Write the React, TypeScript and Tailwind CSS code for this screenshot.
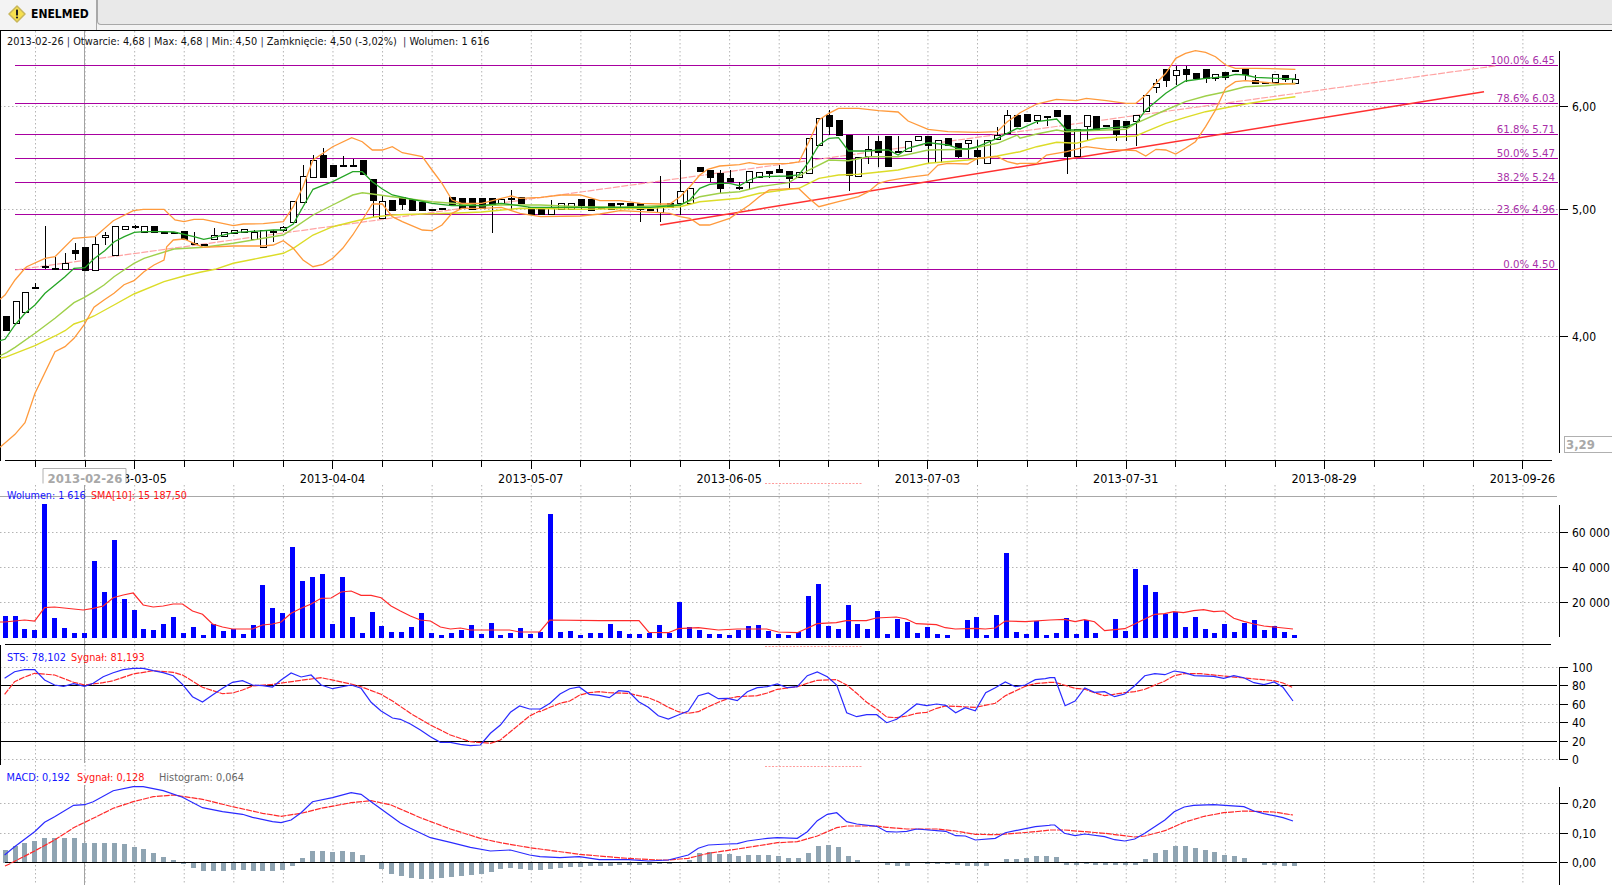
// App.tsx
type P = number[];

const GRID_X = Array.from({ length: 31 }, (_, k) => 35.5 + 49.58 * k);
const barX = (i: number) => 5.6 + 9.917 * i;
const FONT = "'DejaVu Sans Condensed','DejaVu Sans',sans-serif";

// crops were read at different scales, these map them back to page coordinates
const low = (ox: number, oy: number, fx: number) => (pts: P[]) => pts.map(([x, y]) => [ox + x / fx, oy + y / 3]);
const z0 = low(0, 250, 3);
const z1 = low(0, 0, 3);
const z2 = low(520, 90, 2.904);
const z3 = low(1020, 30, 2.64);
const z4 = low(0, 420, 2.8);
const z5 = low(1050, 420, 2.786);
const z6 = low(0, 625, 2.8);
const z7 = low(1050, 625, 2.786);
const z8 = low(600, 570, 3);
const z9 = low(540, 625, 3);

const clip = (pts: P[], from: number, to: number) => pts.filter(([x]) => x >= from && x < to);
const path = (pts: P[]) => pts.map(([x, y]) => `${x.toFixed(1)},${y.toFixed(1)}`).join(" ");

const upper = [
  ...z0([[0, 148], [15, 135], [45, 90], [75, 55]]),
  ...z1([[80, 800], [135, 775], [165, 770], [220, 715], [285, 710], [340, 662], [400, 632], [430, 628], [492, 628], [525, 660], [552, 665], [582, 658], [610, 658], [700, 677], [730, 672], [790, 671], [850, 665], [880, 620], [909, 560], [939, 480], [969, 460], [998, 440], [1055, 413], [1087, 425], [1117, 450], [1147, 450], [1177, 440], [1207, 458], [1267, 470], [1296, 510], [1326, 550], [1356, 600], [1385, 610], [1445, 610], [1504, 595], [1534, 588]]),
  ...clip(z2([[0, 325], [60, 322], [120, 315], [175, 315], [232, 332], [290, 332], [350, 340], [407, 342], [435, 342], [465, 320], [493, 290], [522, 255], [545, 238], [580, 228], [637, 224], [666, 218], [695, 223], [781, 220], [810, 216], [839, 155], [868, 90], [897, 70], [925, 55], [983, 55], [1041, 62], [1098, 66], [1127, 93], [1185, 118], [1243, 125], [1330, 127], [1386, 125], [1415, 95], [1444, 75]]), 515, 1020),
  ...z3([[0, 248], [44, 222], [96, 208], [149, 212], [175, 205], [228, 212], [280, 220], [306, 220], [332, 195], [359, 160], [385, 130], [411, 85], [437, 70], [463, 62], [490, 67], [516, 80], [543, 105], [569, 115], [622, 115], [727, 118]]),
];
const lower = [
  ...z0([[0, 592], [45, 553], [75, 518], [105, 430], [165, 305], [195, 290], [222, 265], [252, 225], [282, 172], [312, 150], [342, 130], [372, 104], [402, 92], [432, 65], [462, 45], [492, 30]]),
  ...z1([[500, 740], [520, 720], [552, 717], [582, 730], [610, 742], [700, 738], [790, 738], [820, 735], [850, 722], [880, 745], [909, 780], [939, 800], [969, 793], [998, 775], [1028, 745], [1058, 705], [1087, 660], [1117, 612], [1147, 612], [1177, 650], [1207, 665], [1267, 690], [1296, 692], [1326, 675], [1356, 640], [1385, 625], [1445, 625], [1504, 622]]),
  ...clip(z2([[0, 370], [60, 380], [175, 378], [232, 372], [290, 362], [350, 365], [407, 368], [435, 370], [465, 380], [493, 385], [522, 405], [550, 405], [609, 385], [666, 345], [695, 320], [724, 300], [781, 296], [810, 296], [839, 325], [868, 350], [925, 335], [983, 320], [1012, 305], [1041, 280], [1070, 272], [1127, 262], [1185, 255], [1214, 225], [1243, 220], [1300, 222], [1329, 205], [1386, 200], [1415, 215], [1444, 222]]), 515, 1020),
  ...z3([[0, 400], [44, 400], [70, 375], [123, 365], [175, 350], [228, 358], [306, 362], [332, 378], [359, 358], [385, 360], [411, 372], [437, 355], [463, 335], [490, 290], [516, 240], [543, 175], [569, 155], [595, 152], [674, 160], [727, 162]]),
];
const maFast = [
  ...z0([[0, 272], [15, 268], [45, 225], [75, 190], [105, 165], [135, 130], [165, 105], [195, 80], [222, 55]]),
  ...z1([[255, 803], [284, 775], [314, 752], [343, 725], [373, 710], [403, 697], [433, 695], [493, 695], [522, 696], [552, 703], [582, 710], [611, 718], [641, 712], [700, 698], [820, 690], [850, 690], [880, 672], [909, 620], [939, 568], [969, 556], [998, 545], [1058, 515], [1087, 515], [1117, 545], [1147, 567], [1177, 585], [1237, 598], [1296, 610], [1356, 617], [1445, 617], [1504, 610]]),
  ...clip(z2([[32, 352], [90, 352], [175, 352], [290, 352], [378, 352], [465, 345], [493, 330], [522, 295], [551, 283], [580, 280], [609, 280], [637, 287], [666, 270], [695, 260], [781, 258], [810, 255], [839, 215], [868, 165], [897, 145], [925, 143], [954, 183], [1012, 183], [1041, 180], [1070, 180], [1098, 195], [1127, 175], [1185, 158], [1243, 165], [1271, 175], [1300, 177], [1329, 170], [1386, 145], [1444, 115]]), 515, 1020),
  ...z3([[0, 297], [44, 275], [97, 267], [123, 300], [175, 300], [254, 292], [280, 290], [306, 280], [332, 240], [385, 190], [411, 170], [437, 153], [490, 145], [543, 140], [569, 133], [595, 135], [622, 142], [674, 145], [727, 147]]),
];
const maMid = [
  ...z0([[0, 317], [20, 308], [45, 292], [105, 250], [165, 205], [222, 158], [252, 143], [282, 125], [312, 105], [342, 80], [372, 60], [402, 40], [432, 25]]),
  ...z1([[522, 747], [611, 742], [700, 730], [790, 715], [850, 705], [880, 685], [939, 645], [998, 615], [1058, 585], [1087, 578], [1117, 582], [1177, 590], [1237, 598], [1296, 605], [1356, 610], [1445, 617], [1504, 615]]),
  ...clip(z2([[60, 345], [175, 350], [290, 352], [378, 348], [465, 345], [522, 320], [580, 310], [637, 305], [695, 290], [781, 278], [839, 240], [897, 210], [954, 212], [1012, 200], [1098, 200], [1185, 180], [1300, 178], [1386, 160], [1444, 135]]), 515, 1020),
  ...z3([[0, 325], [44, 312], [97, 300], [123, 305], [175, 302], [280, 298], [306, 280], [385, 240], [437, 215], [490, 198], [543, 185], [595, 170], [648, 167], [727, 160]]),
];
const maSlow = [
  ...z0([[0, 325], [15, 322], [105, 287], [165, 258], [195, 242], [222, 222], [252, 212], [282, 198], [342, 165], [402, 132], [492, 95], [552, 78], [600, 67]]),
  ...z1([[645, 808], [700, 790], [790, 772], [850, 760], [880, 745], [939, 705], [998, 680], [1058, 665], [1117, 652], [1177, 645], [1237, 643], [1356, 640], [1445, 636]]),
  ...clip(z2([[0, 355], [175, 358], [378, 355], [465, 350], [522, 335], [637, 325], [695, 310], [781, 298], [810, 295], [868, 265], [925, 255], [983, 253], [1098, 240], [1185, 220], [1300, 210], [1386, 198]]), 515, 1020),
  ...z3([[0, 365], [44, 350], [97, 337], [149, 340], [202, 325], [306, 318], [332, 305], [385, 280], [437, 262], [490, 245], [543, 233], [595, 222], [648, 212], [727, 200]]),
];

// top, bottom, white, high, low
const CANDLES: number[][] = [
  [316, 330, 0], [301, 323, 1], [292, 312, 1], [287, 288, 0, 283, 289], [266, 267, 0, 226, 269], [268, 269, 0, 257, 270], [263, 269, 1, 253], [250, 253, 0, 243, 260], [247, 270, 0], [244, 270, 1, 237],
  [235, 237, 1, 232, 245], [226, 255, 1], [226, 229, 1], [226, 227, 0, 225, 229], [226, 232, 1], [226, 232, 0], [232, 233, 0], [232, 233, 0], [231, 239, 0], [243, 244, 0, 232, 245],
  [244, 245, 0], [235, 239, 1, 228], [232, 236, 1], [230, 233, 1], [229, 232, 1], [232, 239, 1, 230], [230, 247, 1], [231, 232, 0, 230, 242], [227, 230, 1, 226, 232], [201, 222, 1],
  [176, 202, 1, 165], [160, 177, 1, 155], [155, 177, 0, 148], [165, 176, 0], [165, 166, 0, 156, 166], [165, 166, 0, 159, 166], [160, 174, 0], [179, 200, 0, 179, 217], [201, 218, 1, 195], [200, 210, 0],
  [197, 204, 0, 197, 210], [199, 210, 0], [202, 210, 0], [209, 210, 0], [208, 209, 0], [197, 204, 0], [198, 208, 0], [198, 209, 0], [198, 208, 0], [198, 204, 0, 198, 233],
  [199, 203, 1], [198, 199, 0, 190, 210], [197, 203, 0], [207, 214, 0], [209, 214, 0], [208, 214, 1, 200], [203, 209, 1], [203, 209, 1], [199, 205, 0, 199, 210], [199, 210, 0],
  [207, 208, 0], [203, 209, 0], [203, 204, 0, 203, 209], [203, 208, 0], [203, 209, 0, 203, 222], [209, 210, 0], [207, 212, 1, 176, 222], [203, 207, 0], [191, 203, 1, 160, 215], [188, 203, 1],
  [167, 171, 0], [170, 177, 0, 170, 182], [173, 188, 0, 170, 193], [178, 181, 0, 170], [187, 188, 0, 182, 190], [171, 182, 1, 171, 189], [172, 177, 1, 172, 178], [171, 173, 0, 171, 178], [169, 172, 0, 165], [171, 178, 0, 171, 188],
  [172, 177, 1], [138, 173, 1], [118, 145, 1], [115, 126, 0, 110, 135], [120, 135, 0], [135, 175, 0, 135, 191], [157, 176, 1], [149, 156, 1, 136, 164], [141, 152, 0, 136, 167], [136, 166, 0],
  [151, 152, 0, 136, 152], [141, 151, 1, 141, 152], [136, 140, 1], [136, 145, 0, 136, 163], [140, 162, 1], [138, 145, 0], [143, 156, 0, 143, 158], [140, 143, 1, 140, 158], [150, 156, 0, 140, 165], [140, 163, 1],
  [135, 139, 1, 127], [115, 133, 1, 110], [115, 126, 0], [114, 121, 0], [115, 120, 1, 115, 124], [116, 117, 0, 116, 126], [110, 116, 0], [115, 156, 0, 115, 174], [129, 156, 1], [115, 126, 1, 115, 141],
  [116, 130, 0], [125, 126, 0], [120, 134, 0, 120, 141], [121, 127, 0, 121, 141], [115, 121, 1, 115, 146], [95, 111, 1], [83, 87, 1, 79, 93], [69, 80, 0, 69, 87], [70, 75, 1, 66, 85], [69, 74, 0, 66, 82],
  [73, 78, 0], [69, 78, 0, 69, 83], [74, 78, 1, 74, 81], [72, 77, 0, 72, 80], [70, 71, 0], [69, 74, 0, 69, 81], [80, 83, 0, 75], [82, 83, 0], [74, 82, 1], [75, 79, 0, 75, 82], [79, 83, 1, 74],
];

const VOLUME = [
  21.7, 21.7, 8.7, 7.7, 133.7, 19.7, 9.7, 4.7, 4.7, 76.7, 45.7, 97.7, 38.7, 27.7, 8.7, 7.7, 13.7, 20.7, 4.7, 10.7,
  2.7, 13.7, 6.7, 8.7, 3.7, 12.7, 52.7, 29.7, 24.7, 90.7, 56.7, 60.7, 63.7, 13.7, 60.7, 20.7, 4.7, 25.7, 11.7, 5.7,
  5.7, 10.7, 24.7, 4.7, 2.7, 4.7, 7.7, 12.7, 3.7, 14.7, 2.7, 4.7, 9.7, 3.7, 5.7, 124, 5.7, 6.7, 2.7, 4.7,
  4.7, 14, 7, 4, 4, 5, 13, 5, 36, 11, 8, 4, 4, 3, 8, 12, 13, 7, 4, 3,
  6, 42, 54, 12, 9, 33, 14, 9, 27, 4, 19, 16, 5, 11, 4, 3, 0, 18, 21, 3,
  23, 85, 6, 4, 17, 3, 5, 19.7, 3.7, 17.7, 4.7, 0, 18.7, 6.7, 68.7, 52.7, 45.7, 23.7, 25.7, 10.7,
  20.7, 8.7, 4.7, 13.7, 5.7, 14.7, 17.7, 7.7, 11.7, 5.7, 2.7,
];
const HIST = [
  12.3, 16.3, 19.3, 21.3, 24.3, 24.3, 24.3, 24.3, 19.3, 19.3, 19.3, 19.3, 18.3, 15.3, 13.3, 9.3, 5.3, 2.3, -1.7, -5.7,
  -8.7, -8.7, -8.7, -7.7, -7.7, -8.7, -8.7, -8.7, -7.7, -3.7, 4.3, 11.3, 11.3, 10.3, 11.3, 10.3, 7.3, 0, -6.7, -11.7,
  -13.7, -15.7, -16.7, -16.7, -15.7, -14.7, -13.7, -12.7, -11.7, -9.7, -6.7, -5.7, -6.7, -7.7, -7.7, -6.7, -5.7, -4.7, -4, -3.7,
  -3.7, -3.7, -2.7, -2.7, -2.7, -2.7, -1.7, -1, 0, 3, 9.3, 10.3, 8.3, 8.3, 6.3, 7.3, 7.3, 7.3, 6.3, 4.3,
  4.3, 9.3, 16.3, 17.3, 15.3, 6.3, 2.3, 0, 0, -2, -3, -3, 0, -1, -1, -1, -2, -3, -3, -3,
  0, 3.3, 3.3, 4.3, 6.3, 6.3, 5.3, -2, -2, -1, -2, -2, -2, -2, -2, 3.3, 9.3, 12.3, 16.3, 16.3,
  14.3, 12.3, 10.3, 7.3, 6.3, 4.3, 0, -2, -2, -3, -3,
];

const smaLine = [
  ...z4([[0, 606], [13, 606], [41, 603], [69, 600], [97, 603], [125, 563], [153, 561], [206, 567], [233, 570], [261, 565], [289, 558], [317, 533], [345, 525], [373, 519], [401, 555], [429, 561], [457, 558], [485, 552], [511, 552], [539, 573], [567, 583], [595, 612], [623, 621], [651, 627], [707, 627], [735, 615], [763, 612], [787, 606], [815, 580], [843, 565], [871, 552], [899, 535], [927, 534], [955, 516], [983, 513], [1011, 526], [1039, 526], [1067, 533], [1095, 558], [1121, 573], [1149, 588], [1177, 600], [1205, 603], [1233, 621], [1261, 627], [1289, 624], [1317, 630], [1373, 630], [1427, 630], [1455, 636], [1511, 636], [1539, 600]]),
  ...z8([[0, 152], [117, 152], [147, 187], [205, 188], [235, 176], [295, 173], [355, 180], [412, 177], [500, 177], [535, 186], [592, 188], [652, 161], [709, 158], [739, 152], [799, 152], [829, 144], [889, 141], [919, 147], [949, 161], [1009, 164], [1036, 173], [1066, 177], [1126, 175], [1156, 177], [1186, 174], [1216, 153], [1276, 155], [1350, 150]]),
  ...z5([[0, 600], [40, 598], [70, 605], [96, 599], [124, 605], [152, 632], [208, 626], [236, 612], [264, 597], [292, 583], [319, 581], [345, 575], [372, 578], [400, 572], [428, 569], [456, 575], [484, 573], [512, 595], [540, 604], [568, 612], [596, 618], [624, 621], [677, 627]]),
];
const stsBlue = [
  ...z6([[13, 160], [41, 140], [69, 134], [97, 134], [125, 165], [153, 180], [178, 184], [206, 176], [237, 184], [261, 175], [289, 155], [317, 143], [345, 134], [373, 130], [401, 130], [429, 137], [457, 143], [485, 152], [511, 178], [539, 215], [567, 231], [595, 210], [623, 190], [651, 172], [679, 167], [707, 180], [735, 182], [763, 186], [787, 165], [815, 144], [843, 156], [871, 150], [899, 180], [931, 191], [983, 180], [1011, 190], [1039, 232], [1067, 258], [1099, 279], [1121, 283], [1149, 297], [1177, 315], [1205, 335], [1233, 352], [1261, 352], [1289, 358], [1317, 362], [1345, 360], [1373, 325], [1401, 300], [1429, 262], [1455, 243], [1483, 252], [1511, 252]]),
  ...z9([[0, 253], [30, 235], [60, 207], [89, 191], [118, 186], [148, 208], [178, 211], [208, 218], [236, 197], [266, 200], [296, 230], [325, 247], [355, 272], [385, 282], [415, 270], [445, 258], [475, 212], [505, 204], [535, 221], [563, 220], [592, 227], [622, 200], [652, 188], [682, 185], [712, 177], [742, 188], [772, 185], [802, 152], [832, 141], [862, 155], [890, 180], [920, 263], [950, 275], [980, 269], [1010, 269], [1040, 293], [1070, 283], [1100, 260], [1130, 237], [1160, 242], [1190, 237], [1217, 241], [1247, 263], [1276, 248], [1306, 257], [1337, 203], [1366, 188], [1396, 171], [1426, 185], [1456, 180], [1486, 164], [1516, 161]]),
  ...z7([[0, 158], [13, 158], [42, 242], [70, 228], [97, 189], [124, 202], [152, 200], [180, 215], [208, 207], [236, 182], [264, 152], [292, 146], [320, 149], [346, 138], [374, 143], [402, 152], [456, 154], [484, 160], [512, 152], [540, 158], [568, 173], [596, 179], [624, 171], [649, 187], [677, 228]]),
];
const stsRed = [
  ...z6([[13, 208], [41, 170], [69, 156], [97, 145], [153, 150], [206, 172], [237, 180], [289, 173], [317, 167], [373, 147], [429, 137], [485, 142], [511, 150], [567, 187], [623, 206], [651, 204], [679, 195], [707, 183], [763, 178], [843, 166], [899, 158], [983, 177], [1011, 185], [1067, 208], [1099, 228], [1149, 265], [1205, 300], [1261, 330], [1317, 350], [1373, 355], [1401, 345], [1429, 320], [1483, 273], [1511, 258]]),
  ...z9([[0, 260], [30, 247], [60, 235], [89, 228], [118, 211], [148, 203], [178, 200], [208, 203], [266, 205], [296, 212], [325, 218], [355, 230], [385, 247], [415, 260], [445, 265], [475, 260], [505, 245], [535, 232], [563, 221], [592, 215], [652, 212], [682, 204], [712, 193], [772, 185], [802, 175], [832, 166], [890, 164], [920, 180], [950, 205], [980, 232], [1010, 252], [1040, 276], [1070, 278], [1100, 273], [1130, 265], [1160, 262], [1190, 250], [1217, 243], [1306, 247], [1366, 235], [1396, 212], [1426, 198], [1456, 184], [1486, 176]]),
  ...z7([[0, 172], [13, 172], [70, 190], [97, 193], [124, 203], [152, 212], [208, 203], [236, 200], [264, 193], [320, 168], [346, 152], [374, 146], [420, 146], [484, 153], [540, 159], [624, 167], [649, 174], [677, 188]]),
];
const macdBlue = [
  ...z6([[13, 690], [41, 665], [97, 620], [125, 592], [153, 575], [206, 541], [237, 539], [261, 530], [317, 497], [373, 485], [401, 485], [457, 497], [511, 517], [567, 548], [623, 560], [679, 568], [707, 577], [763, 590], [787, 593], [815, 585], [843, 563], [875, 530], [931, 518], [983, 503], [1011, 508], [1039, 530], [1067, 552], [1121, 594], [1149, 610], [1205, 638], [1261, 652], [1317, 667], [1373, 678], [1429, 675], [1483, 690]]),
  ...z9([[0, 695], [60, 698], [118, 695], [178, 704], [266, 704], [325, 708], [385, 705], [445, 690], [475, 670], [505, 660], [563, 657], [592, 656], [622, 648], [682, 640], [712, 638], [772, 640], [802, 620], [832, 587], [862, 568], [890, 563], [920, 590], [950, 597], [1010, 604], [1040, 620], [1070, 621], [1100, 619], [1130, 612], [1217, 619], [1247, 632], [1276, 633], [1306, 645], [1366, 640], [1396, 623], [1426, 617], [1486, 605], [1530, 601]]),
  ...z7([[0, 600], [13, 600], [40, 625], [70, 632], [97, 627], [152, 635], [180, 644], [208, 648], [236, 642], [264, 625], [320, 585], [346, 560], [374, 546], [400, 541], [456, 539], [540, 545], [568, 558], [596, 566], [624, 572], [649, 578], [677, 588]]),
];
const macdRed = [
  [5, 866],
  ...z6([[25, 718], [97, 678], [153, 645], [206, 608], [261, 580], [317, 550], [373, 530], [429, 515], [485, 510], [567, 523], [651, 545], [735, 565], [787, 574], [843, 565], [899, 550], [983, 533], [1039, 527], [1095, 540], [1177, 578], [1261, 612], [1345, 640], [1401, 653], [1483, 668]]),
  ...z9([[0, 672], [118, 688], [236, 698], [296, 702], [355, 705], [385, 705], [445, 700], [505, 685], [592, 672], [682, 658], [712, 653], [772, 650], [832, 633], [862, 620], [890, 608], [920, 603], [1010, 603], [1040, 607], [1100, 612], [1190, 612], [1247, 618], [1306, 628], [1366, 629], [1426, 625], [1486, 620], [1530, 615]]),
  ...z7([[0, 615], [40, 615], [152, 625], [236, 636], [264, 633], [320, 617], [374, 592], [430, 574], [484, 563], [540, 558], [624, 561], [677, 570]]),
];

const FIB = [
  { y: 65.5, label: "100.0% 6.45", ty: 64 },
  { y: 103.5, label: "78.6% 6.03", ty: 102 },
  { y: 134.5, label: "61.8% 5.71", ty: 133 },
  { y: 158.5, label: "50.0% 5.47", ty: 157 },
  { y: 182.5, label: "38.2% 5.24", ty: 181 },
  { y: 214.5, label: "23.6% 4.96", ty: 213 },
  { y: 269.5, label: "0.0% 4.50", ty: 268 },
];
const DOTTED_Y = [106.5, 209.5, 336.5, 532.5, 567.5, 602.5, 667.5, 704.5, 722.5, 759.5, 803.5, 833.5];
const DATES: [number, string][] = [
  [2, "2013-03-05"], [6, "2013-04-04"], [10, "2013-05-07"], [14, "2013-06-05"],
  [18, "2013-07-03"], [22, "2013-07-31"], [26, "2013-08-29"], [30, "2013-09-26"],
];
const TICKS: [number, string][] = [
  [106.5, "6,00"], [209.5, "5,00"], [336.5, "4,00"],
  [532.5, "60 000"], [567.5, "40 000"], [602.5, "20 000"],
  [667.5, "100"], [685.5, "80"], [704.5, "60"], [722.5, "40"], [741.5, "20"], [759.5, "0"],
  [803.5, "0,20"], [833.5, "0,10"], [862.5, "0,00"],
];

function Candle({ c, i }: { c: number[]; i: number }) {
  const [top, bottom, white, high = top, lo = bottom] = c;
  const x = Math.round(barX(i)) + 0.5;
  const flat = bottom - top <= 1;
  return (
    <g>
      <line x1={x} x2={x} y1={high} y2={lo} stroke="#000" strokeWidth={1} shapeRendering="crispEdges" />
      {flat ? (
        <rect x={x - 3.5} y={top} width={7} height={2} fill="#000" shapeRendering="crispEdges" />
      ) : (
        <rect x={x - 3} y={top + 0.5} width={6} height={bottom - top} fill={white ? "#fff" : "#000"} stroke="#000" strokeWidth={1} shapeRendering="crispEdges" />
      )}
    </g>
  );
}

function Chart() {
  return (
    <svg width={1612} height={854} viewBox="0 31 1612 854" className="block">
      {GRID_X.map((x) => (
        <g key={x}>
          <line x1={x} x2={x} y1={31} y2={460} stroke="#b4b4b4" strokeDasharray="1.5 2.5" />
          <line x1={x} x2={x} y1={485} y2={885} stroke="#b4b4b4" strokeDasharray="1.5 2.5" />
        </g>
      ))}
      {DOTTED_Y.map((y) => (
        <line key={y} x1={0} x2={1558} y1={y} y2={y} stroke="#b4b4b4" strokeDasharray="1.5 2.5" />
      ))}

      {/* crosshair */}
      <g stroke="#a3a3a3" shapeRendering="crispEdges">
        <line x1={84.5} x2={84.5} y1={31} y2={457} />
        <line x1={84.5} x2={84.5} y1={485} y2={763} />
        <line x1={84.5} x2={84.5} y1={785} y2={885} />
      </g>

      {/* price pane */}
      <line x1={0.5} x2={0.5} y1={31} y2={461} stroke="#000" />
      <line x1={0.5} x2={0.5} y1={645} y2={765} stroke="#000" />
      {FIB.map((f) => (
        <line key={f.y} x1={15} x2={1558} y1={f.y} y2={f.y} stroke="#a800a0" shapeRendering="crispEdges" />
      ))}
      <line x1={15} y1={270} x2={1497} y2={65.7} stroke="#ffa3a3" strokeWidth={1.2} strokeDasharray="7 1.5" />
      <line x1={660} y1={225} x2={1484} y2={91.7} stroke="#ff3030" strokeWidth={1.5} />
      {CANDLES.map((c, i) => (
        <Candle key={i} c={c} i={i} />
      ))}
      <polyline points={path(maSlow)} fill="none" stroke="#dcdc28" strokeWidth={1.4} />
      <polyline points={path(maMid)} fill="none" stroke="#9fd04a" strokeWidth={1.4} />
      <polyline points={path(maFast)} fill="none" stroke="#25a525" strokeWidth={1.3} />
      <polyline points={path(upper)} fill="none" stroke="#ff9a3c" strokeWidth={1.3} />
      <polyline points={path(lower)} fill="none" stroke="#ff9a3c" strokeWidth={1.3} />
      {FIB.map((f) => (
        <text key={f.label} x={1555} y={f.ty} textAnchor="end" fontFamily={FONT} fontSize={11.3} fill="#a830a8">
          {f.label}
        </text>
      ))}

      {/* info line */}
      <text x={7} y={45} fontFamily={FONT} fontSize={10.85} fill="#111" xmlSpace="preserve">
        2013-02-26 <tspan fill="#335">|</tspan> Otwarcie: 4,68 <tspan fill="#335">|</tspan> Max: 4,68 <tspan fill="#335">|</tspan> Min: 4,50 <tspan fill="#335">|</tspan> Zamknięcie: 4,50 (-3,02%)  <tspan fill="#335">|</tspan> Wolumen: 1 616
      </text>

      {/* time axis */}
      <line x1={5} x2={1552} y1={460.5} y2={460.5} stroke="#000" shapeRendering="crispEdges" />
      {GRID_X.map((x, k) => (
        <line key={k} x1={x} x2={x} y1={460} y2={k % 4 === 2 ? 469 : 467} stroke="#000" shapeRendering="crispEdges" />
      ))}
      <g fontFamily={FONT} fontSize={12.5} fill="#000">
        {DATES.map(([k, d]) => (
          <text key={d} x={GRID_X[k] - 0.5} y={483} textAnchor="middle">
            {d}
          </text>
        ))}
      </g>
      <path d="M43 483.5V468.5H126V483.5" fill="#fff" stroke="#b0b0b0" />
      <text x={85} y={483} textAnchor="middle" fontFamily={FONT} fontSize={13} fontWeight="bold" fill="#a8a8a8">
        2013-02-26
      </text>
      <line x1={765} x2={863} y1={483.5} y2={483.5} stroke="#ff9c9c" strokeDasharray="2 1.5" />

      {/* volume pane */}
      <line x1={0} x2={1557} y1={496.5} y2={496.5} stroke="#a8a8a8" shapeRendering="crispEdges" />
      <g fontFamily={FONT} fontSize={10.7}>
        <text x={7} y={499} fill="#1414ff">Wolumen: 1 616</text>
        <text x={91} y={499} fill="#ff1414">SMA[10]: 15 187,50</text>
      </g>
      {VOLUME.map((h, i) => (
        <rect key={i} x={Math.round(barX(i)) - 3} y={637.7 - h} width={5} height={h} fill="#0000ff" shapeRendering="crispEdges" />
      ))}
      <polyline points={path(smaLine)} fill="none" stroke="#ff2a2a" strokeWidth={1.2} />
      <line x1={5} x2={1551} y1={644.5} y2={644.5} stroke="#000" shapeRendering="crispEdges" />
      <line x1={765} x2={863} y1={646.5} y2={646.5} stroke="#ff9c9c" strokeDasharray="2 1.5" />

      {/* stochastic pane */}
      <g fontFamily={FONT} fontSize={10.85}>
        <text x={7} y={661} fill="#1414ff">STS: 78,102</text>
        <text x={71} y={661} fill="#ff1414">Sygnał: 81,193</text>
      </g>
      <line x1={0} x2={1557} y1={685.5} y2={685.5} stroke="#000" shapeRendering="crispEdges" />
      <line x1={0} x2={1557} y1={741.5} y2={741.5} stroke="#000" shapeRendering="crispEdges" />
      <polyline points={path(stsRed)} fill="none" stroke="#ff2a2a" strokeWidth={1.2} strokeDasharray="6 1" />
      <polyline points={path(stsBlue)} fill="none" stroke="#2a2aff" strokeWidth={1.2} />
      <line x1={765} x2={863} y1={766.5} y2={766.5} stroke="#ff9c9c" strokeDasharray="2 1.5" />

      {/* macd pane */}
      <g fontFamily={FONT} fontSize={10.85}>
        <text x={6.5} y={781} fill="#1414ff">MACD: 0,192</text>
        <text x={77} y={781} fill="#ff1414">Sygnał: 0,128</text>
        <text x={159} y={781} fill="#666">Histogram: 0,064</text>
      </g>
      {HIST.map((h, i) => (
        <rect key={i} x={Math.round(barX(i)) - 3} y={h > 0 ? 862.5 - h : 862.5} width={5} height={Math.abs(h)} fill="#8fa4b2" shapeRendering="crispEdges" />
      ))}
      <line x1={5} x2={1557} y1={862.5} y2={862.5} stroke="#000" shapeRendering="crispEdges" />
      <polyline points={path(macdRed)} fill="none" stroke="#ff2a2a" strokeWidth={1.2} strokeDasharray="6 1" />
      <polyline points={path(macdBlue)} fill="none" stroke="#2a2aff" strokeWidth={1.2} />

      {/* value axes */}
      <g stroke="#000" shapeRendering="crispEdges">
        <line x1={1559.5} x2={1559.5} y1={51} y2={453} />
        <line x1={1559.5} x2={1559.5} y1={505} y2={637} />
        <line x1={1559.5} x2={1559.5} y1={667} y2={760} />
        <line x1={1559.5} x2={1559.5} y1={787} y2={885} />
        {TICKS.map(([y]) => (
          <line key={y} x1={1559} x2={1568} y1={y} y2={y} />
        ))}
      </g>
      <g fontFamily={FONT} fontSize={12} fill="#000">
        {TICKS.map(([y, t]) => (
          <text key={y} x={1572} y={y + 4.5}>
            {t}
          </text>
        ))}
      </g>
      <rect x={1564.5} y={436.5} width={48} height={16} fill="#fff" stroke="#b0b0b0" />
      <text x={1566} y={449} fontFamily={FONT} fontSize={13} fontWeight="bold" fill="#a8a8a8">
        3,29
      </text>
    </svg>
  );
}

export default function App() {
  return (
    <div className="h-[885px] w-[1612px] overflow-hidden bg-white">
      <div className="flex h-[31px] border-b border-black">
        <div className="flex w-[97px] items-center gap-[5px] border-r border-[#a8a8a8] bg-[#f3f3f3] pb-[3px] pl-[8px]">
          <svg width="18" height="18" viewBox="0 0 18 18" className="shrink-0">
            <path d="M9 1 17 9 9 17 1 9Z" fill="#f6e04e" stroke="#c8b65a" strokeLinejoin="round" strokeWidth="1.5" />
            <rect x="8" y="4.5" width="2" height="6" rx="0.6" fill="#222" />
            <circle cx="9" cy="12.5" r="1.1" fill="#222" />
          </svg>
          <span className="font-['DejaVu_Sans_Condensed','DejaVu_Sans',sans-serif] text-[12px] font-bold text-black">ENELMED</span>
        </div>
        <div className="flex flex-1 flex-col bg-[#f3f3f3]">
          <div className="h-[25px] rounded-bl-[4px] border-b border-l border-[#a8a8a8] bg-[#e9e9e9]" />
        </div>
      </div>
      <Chart />
    </div>
  );
}
